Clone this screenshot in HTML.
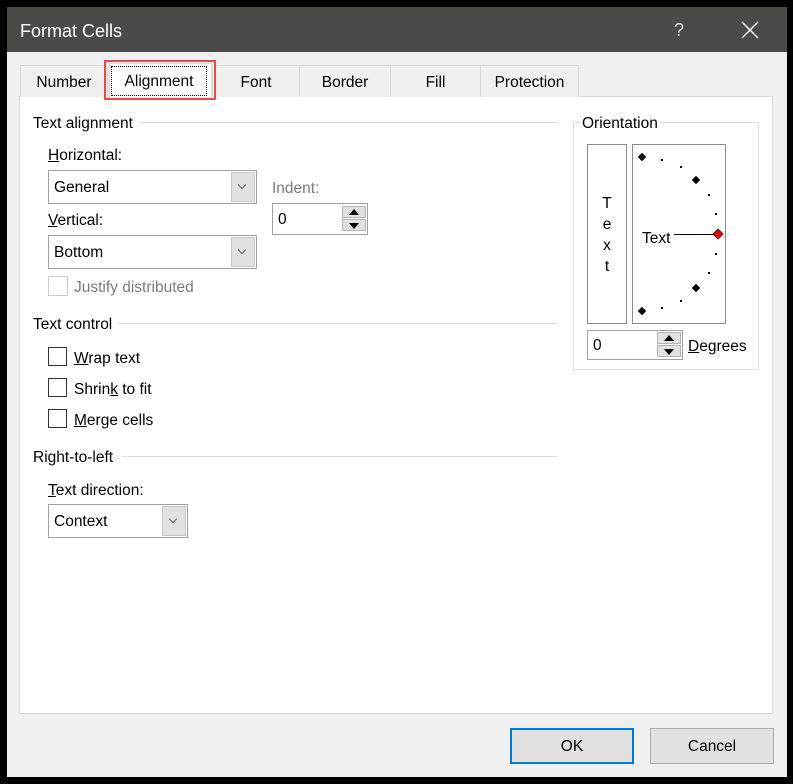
<!DOCTYPE html>
<html><head><meta charset="utf-8"><style>
*{margin:0;padding:0;box-sizing:border-box}
body{width:793px;height:784px;background:#000;position:relative;overflow:hidden;font-family:"Liberation Sans",sans-serif;font-size:15.5px;color:#000}
.a{position:absolute;white-space:nowrap}
.t{line-height:18px}
.line{position:absolute;height:1px;background:#dcdcdc}
.box{position:absolute;background:#fff;border:1px solid #a0a0a0}
.dd{position:absolute;top:1px;right:1px;bottom:1px;width:24px;background:#e1e1e1;border:1px solid #c8c8c8}
.dd:after{content:"";position:absolute;left:7px;top:9px;width:5px;height:5px;border-right:1px solid #606060;border-bottom:1px solid #606060;transform:rotate(45deg)}
.cb{position:absolute;width:19px;height:19px;border:1px solid #333;background:#fff}
.sp{position:absolute;right:1px;width:24px;height:12px;background:#e1e1e1;border:1px solid #b5b5b5}
u{text-decoration:underline}
.dm{position:absolute;width:6px;height:6px;background:#000;transform:rotate(45deg)}
.dt{position:absolute;width:2px;height:2px;background:#000}
.tab{position:absolute;top:65px;height:32px;border:1px solid #d9d9d9;border-bottom:none;background:#f0f0f0;text-align:center;line-height:34px}
</style></head><body>
<div class="a" style="left:7px;top:7px;width:780px;height:770px;background:#f0f0f0"></div>
<div class="a" style="left:7px;top:7px;width:780px;height:45px;background:#4b4a47"></div>
<div class="a" style="left:20px;top:20px;color:#fff;font-size:18px;line-height:22px">Format Cells</div>
<div class="a" style="left:674px;top:19px;color:#ddd;font-size:18px;line-height:22px">?</div>
<svg class="a" style="left:741px;top:21px" width="18" height="18"><path d="M1 1L17 17M17 1L1 17" stroke="#fff" stroke-width="1.4"/></svg>

<div class="a" style="left:19px;top:96px;width:754px;height:618px;background:#fff;border:1px solid #d9d9d9"></div>
<div class="tab" style="left:20px;width:88px">Number</div>
<div class="tab" style="left:212px;width:88px">Font</div>
<div class="tab" style="left:299px;width:92px">Border</div>
<div class="tab" style="left:390px;width:91px">Fill</div>
<div class="tab" style="left:480px;width:99px">Protection</div>
<div class="a" style="left:109px;top:63px;width:103px;height:35px;background:#fff;border:1px solid #d9d9d9;border-bottom:none"></div>
<div class="a" style="left:111px;top:66px;width:96px;height:30px;border:1px dotted #000;text-align:center;line-height:30px">Alignment</div>
<div class="a" style="left:104px;top:60px;width:112px;height:40px;border:2px solid #e84a4a"></div>

<div class="a t" style="left:33px;top:115px">Text alignment</div>
<div class="line" style="left:140px;top:122px;width:417px"></div>
<div class="a t" style="left:48px;top:147px"><u>H</u>orizontal:</div>
<div class="box" style="left:48px;top:170px;width:209px;height:34px"><div class="a t" style="left:5px;top:8px">General</div><div class="dd"></div></div>
<div class="a t" style="left:272px;top:180px;color:#7a7a7a">Indent:</div>
<div class="box" style="left:272px;top:203px;width:96px;height:32px"><div class="a t" style="left:5px;top:7px">0</div>
<div class="sp" style="top:2px"><svg style="position:absolute;left:6px;top:2px" width="10" height="6"><path d="M0 6L5 0L10 6Z" fill="#000"/></svg></div>
<div class="sp" style="top:15px"><svg style="position:absolute;left:6px;top:3px" width="10" height="6"><path d="M0 0L5 6L10 0Z" fill="#000"/></svg></div></div>
<div class="a t" style="left:48px;top:212px"><u>V</u>ertical:</div>
<div class="box" style="left:48px;top:235px;width:209px;height:34px"><div class="a t" style="left:5px;top:8px">Bottom</div><div class="dd"></div></div>
<div class="a" style="left:48px;top:276px;width:20px;height:20px;border:1px solid #ccc"></div>
<div class="a t" style="left:74px;top:279px;color:#7a7a7a">Justify distributed</div>

<div class="a t" style="left:33px;top:316px">Text control</div>
<div class="line" style="left:118px;top:323px;width:439px"></div>
<div class="cb" style="left:48px;top:347px"></div><div class="a t" style="left:74px;top:350px"><u>W</u>rap text</div>
<div class="cb" style="left:48px;top:378px"></div><div class="a t" style="left:74px;top:381px">Shrin<u>k</u> to fit</div>
<div class="cb" style="left:48px;top:409px"></div><div class="a t" style="left:74px;top:412px"><u>M</u>erge cells</div>

<div class="a t" style="left:33px;top:449px">Right-to-left</div>
<div class="line" style="left:122px;top:456px;width:435px"></div>
<div class="a t" style="left:48px;top:482px"><u>T</u>ext direction:</div>
<div class="box" style="left:48px;top:504px;width:140px;height:34px"><div class="a t" style="left:5px;top:8px">Context</div><div class="dd"></div></div>

<div class="a" style="left:573px;top:122px;width:186px;height:248px;border:1px solid #dcdcdc"></div>
<div class="a t" style="left:580px;top:115px;background:#fff;padding:0 2px">Orientation</div>
<div class="a" style="left:587px;top:144px;width:40px;height:180px;border:1px solid #8a8a8a;text-align:center;line-height:21px;padding-top:48px">T<br>e<br>x<br>t</div>
<div class="a" style="left:632px;top:144px;width:94px;height:180px;border:1px solid #8a8a8a"></div>
<div class="dm" style="left:639px;top:154px"></div>
<div class="dm" style="left:693px;top:177px"></div>
<div class="dm" style="left:715px;top:231px;background:#e00000;outline:1px solid #600"></div>
<div class="dm" style="left:693px;top:285px"></div>
<div class="dm" style="left:639px;top:308px"></div>
<div class="dt" style="left:661px;top:159px"></div><div class="dt" style="left:680px;top:166px"></div>
<div class="dt" style="left:708px;top:194px"></div><div class="dt" style="left:715px;top:213px"></div>
<div class="dt" style="left:715px;top:253px"></div><div class="dt" style="left:708px;top:272px"></div>
<div class="dt" style="left:680px;top:300px"></div><div class="dt" style="left:661px;top:307px"></div>
<div class="a" style="left:674px;top:234px;width:40px;height:1px;background:#000"></div>
<div class="a t" style="left:642px;top:230px">Text</div>
<div class="box" style="left:587px;top:330px;width:96px;height:30px"><div class="a t" style="left:5px;top:6px">0</div>
<div class="sp" style="top:1px"><svg style="position:absolute;left:6px;top:2px" width="10" height="6"><path d="M0 6L5 0L10 6Z" fill="#000"/></svg></div>
<div class="sp" style="top:14px"><svg style="position:absolute;left:6px;top:3px" width="10" height="6"><path d="M0 0L5 6L10 0Z" fill="#000"/></svg></div></div>
<div class="a t" style="left:688px;top:338px"><u>D</u>egrees</div>

<div class="a" style="left:510px;top:728px;width:124px;height:36px;background:#e1e1e1;border:2px solid #0078d7;text-align:center;line-height:34px">OK</div>
<div class="a" style="left:650px;top:728px;width:124px;height:36px;background:#e1e1e1;border:1px solid #adadad;text-align:center;line-height:36px">Cancel</div>
</body></html>
